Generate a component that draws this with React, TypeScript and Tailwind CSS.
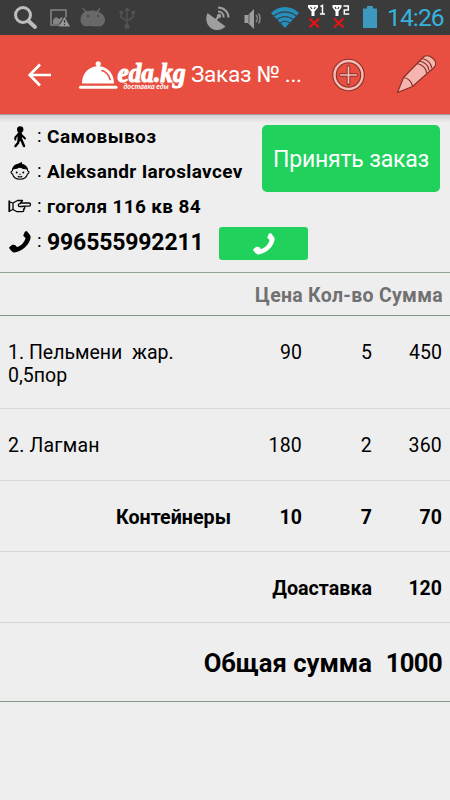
import type { ReactNode } from "react";

const contacts = [
  { icon: <WalkIcon />, text: "Самовывоз", style: "tracking-[0.45px]" },
  { icon: <FaceIcon />, text: "Aleksandr Iaroslavcev", style: "tracking-[0.35px]" },
  { icon: <HandIcon />, text: "гоголя 116 кв 84", style: "tracking-[0.35px]" },
];

const items = [
  { name: "1. Пельмени  жар. 0,5пор", price: 90, count: 5, sum: 450, style: "h-[93px]" },
  { name: "2. Лагман", price: 180, count: 2, sum: 360, style: "h-[72px] tracking-[0.2px]" },
];

function WalkIcon() {
  return (
    <svg width="22" height="22" viewBox="0 0 22 22" fill="none" stroke="#000" strokeLinecap="round" strokeLinejoin="round">
      <circle cx="11.200" cy="3.500" r="3.200" fill="#000" stroke="none" />
      <path d="M10.800 8v5" strokeWidth="4.500" />
      <path d="M9.500 8l-3.200 3.500v2M12 8.500l4 4" strokeWidth="2" />
      <path d="M10 13l-1 4-2.500 3M12 13l1.500 3.500 1.500 3.500" strokeWidth="2.500" />
    </svg>
  );
}

function FaceIcon() {
  return (
    <svg width="22" height="22" viewBox="0 0 22 22" fill="none" stroke="#000" strokeWidth="1.100">
      <path d="M3.300 10C3.300 6 6.600 3.500 11 3.500S18.700 6 18.700 10c1.600-.2 1.800 2.700-.2 3-1 3.400-3.800 5.300-7.500 5.300s-6.500-1.900-7.500-5.300c-2-.3-1.800-3.200-.2-3z" />
      <path d="M4 8c3-.3 5-1 7-2C13 7.200 15 8 18 8c-1-3-3.500-4.500-5.500-4.500V1.800L8.500 3.500C6 4 4.500 6 4 8z" fill="#000" />
      <circle cx="7.700" cy="11.500" r="1" fill="#000" stroke="none" />
      <circle cx="14.300" cy="11.500" r="1" fill="#000" stroke="none" />
      <path d="M8.800 15.300c1.300.9 3.100.9 4.400 0M10.300 13.200h1.400" />
    </svg>
  );
}

function HandIcon() {
  return (
    <svg width="24" height="17" viewBox="0 0 24 17" fill="none" stroke="#000" strokeWidth="1.300" strokeLinejoin="round">
      <path d="M1.300 2.500v11.500" strokeWidth="1.800" />
      <path d="M1.500 4l3.500 1v6.500L1.500 13M5 5l4.500-2.500h5L11.800 6M12 5h9c2 0 2 3.200 0 3.200h-5.500c1.800.3 1.800 2.700 0 2.800.8 1.300.2 2.700-1.300 2.700H9L5 11.500M11.500 5.500c-2 1.500-1.200 3.300.3 3H15.500" />
    </svg>
  );
}

function PhoneIcon({ color }: { color: string }) {
  return (
    <svg width="24" height="24" viewBox="0 0 24 24" fill={color}>
      <path d="M16.800 1.700l2-.7 3.300 4.300c1.700 2.400-1 8.300-5 12-4.200 3.900-9.800 5.700-12 4.900C3.400 21.400 1.500 18.900 1 17.600l3.200-2.800 2.900.1 1.800 2.100c2.500-.5 4.500-2 6-3.700 1.500-1.800 2.400-3.500 2.600-5.200l-2.300-2.300z" />
    </svg>
  );
}

function StatusBar() {
  return (
    <div className="flex h-[35px] bg-[#3b3b3b]">
      <svg width="390" height="35" viewBox="0 0 390 35" fill="none">
        <g stroke="#bdbdbd">
          <circle cx="23" cy="15" r="7.500" strokeWidth="3" />
          <path d="M28.500 21l6.500 6" strokeWidth="4" strokeLinecap="round" />
        </g>
        <path d="M66 17.500V10H51v15h9" stroke="#858585" strokeWidth="1.500" />
        <path d="M53 22v-2l3-3 3 2 3-2 1 1-4 6h-6z" fill="#858585" />
        <path d="M64.500 17l5.500 9.500H59z" fill="#9a9a9a" />
        <path d="M64.500 20v3M64.500 24v1.200" stroke="#3b3b3b" strokeWidth="1.200" />
        <path d="M80.500 20c0-4 1.500-6.500 4.500-8.500l-3-3 1-.5 4 3.300c3-1 7-1 9.500 0l3-3.300 1 .5-2 3.500c5 2 6.500 5 6.500 8 0 4-3.500 7-6.500 6.500-2-.4-3 0-5 0s-3-.8-5-.3c-4 .8-8-1.500-8-6.200z" fill="#686868" />
        <circle cx="88" cy="16" r="1" fill="#3b3b3b" />
        <circle cx="98" cy="16" r="1" fill="#3b3b3b" />
        <g stroke="#535353" strokeWidth="1.500">
          <path d="M127 9v16M121 13v4l6 4 6-4v-5" />
          <path d="M127 7l3 4h-6z" fill="#535353" stroke="none" />
          <circle cx="127" cy="26.500" r="2.500" fill="#535353" stroke="none" />
          <path d="M119.500 12.500h3.500M131.500 12.500h3.500" strokeWidth="3" />
        </g>
        <g stroke="#9e9e9e" strokeWidth="2">
          <path d="M207.500 13l18 13.500c-4.500 4.500-11 4.500-15 1.200-4.300-3.500-5.300-9-3-14.700z" fill="#9e9e9e" stroke="none" />
          <path d="M214 22l5-6" />
          <circle cx="219" cy="16" r="2.200" fill="#9e9e9e" stroke="none" />
          <path d="M218 11.500c3.500 0 6 2.500 5.500 6M218 7.500c6 0 10.500 4.500 10.500 10" />
        </g>
        <path d="M244.500 15h3.500l6-6v20l-6-6h-3.500z" fill="#9e9e9e" />
        <path d="M249 14v9" stroke="#555" strokeWidth="1" />
        <path d="M256 15c1.800 2 1.800 5 0 7M258.500 13.500c2 3 2 7.500 0 10" stroke="#858585" strokeWidth="1.500" />
        <path d="M271 13c8-8 20-8 28 0l-14 15z" fill="#278fbd" />
        <path d="M273 16.500c7-6 17-6 24 0M276.500 20c5-4.500 12-4.500 17 0M279.500 23.500c3.500-3 7.500-3 11 0" stroke="#354954" strokeWidth="1.400" />
        <path d="M308 5h10v2.500l-3.500 4V16h-3v-4.500l-3.500-4zM332.500 5h9v2.500l-3 4V16h-3v-4.500l-3-4z" fill="#fff" />
        <path d="M310.500 7l1.500 2M315.500 7L314 9M335 7l1.200 2M339 7l-1.200 2" stroke="#3b3b3b" strokeWidth="1.200" />
        <g stroke="#fff" strokeWidth="1.500">
          <path d="M320.500 6.500l2-1V14M320 14h5" />
          <path d="M343.500 6h4.800v4h-4v4h5" />
        </g>
        <path d="M309.500 18.500l9.500 9m0-9l-9.500 9M334 18.500l9.500 9m0-9l-9.500 9" stroke="#ec1111" strokeWidth="2" />
        <path d="M367 6h6v2.500h4V28h-14V8.500h4z" fill="#3d99c0" />
      </svg>
      <span className="-ml-[3px] text-[24.600px] leading-[36px] tracking-[-0.9px] text-[#36b3df]">14:26</span>
    </div>
  );
}

function Header() {
  return (
    <header className="flex h-20 items-center border-b border-[#a39a9a] bg-[#e84f40] text-white">
      <svg width="190" height="79" viewBox="0 0 190 79" fill="none">
        <path d="M51 40H30M40 29.500L29.700 40 40 50.500" stroke="#fff" strokeWidth="2.700" />
        <path d="M82 48.500c0-9.500 6-16.500 15-17.200a2.700 2.700 0 1 1 2.500 0c8.500.7 14.500 7.700 14.500 17.200z" fill="#fff" />
        <path d="M80.500 52.300h35.500" stroke="#fff" strokeWidth="3" strokeLinecap="round" />
        <path d="M102 35.500c4.500 1.500 7 4.500 8 9" stroke="#e84f40" strokeWidth="1.700" strokeLinecap="round" />
        <text x="117.500" y="46.500" fill="#fff" stroke="#fff" strokeWidth="1.100" strokeLinejoin="round" fontFamily="Liberation Serif, serif" fontSize="27" fontWeight="700" fontStyle="italic" textLength="68" lengthAdjust="spacingAndGlyphs">eda.kg</text>
        <text x="123.500" y="54" fill="#fff" fontFamily="Lato, sans-serif" fontSize="8" fontWeight="700" fontStyle="italic" textLength="45" lengthAdjust="spacingAndGlyphs">доставка еды</text>
      </svg>
      <h1 className="w-[140px] whitespace-nowrap pl-px pt-px text-[22.600px] tracking-[-0.3px]">Заказ № ...</h1>
      <svg width="120" height="79" viewBox="330 0 120 79" fill="none" strokeLinejoin="round">
        <circle cx="348.500" cy="40" r="14" stroke="#8b3028" strokeWidth="4.600" />
        <circle cx="348.500" cy="40" r="14" stroke="#f8bbb5" strokeWidth="2.400" />
        <path d="M348.500 32v16.500M340.500 40h16" stroke="#8b3028" strokeWidth="3.600" strokeLinecap="round" />
        <path d="M348.500 32v16M340.500 40h16" stroke="#f8bbb5" strokeWidth="1.700" strokeLinecap="round" />
        <g fill="#f5b5af" stroke="#8b3028" strokeWidth="1.200">
          <path d="M397.500 57.500l6-15 20-20.500c5-4.500 15.500 4 11 10L412.500 51.500z" />
          <path d="M403.500 42.500c4.500.5 8.500 4 9 9M417 28.500c5.500 1 9.300 5 9.500 9.500M419.500 26c5.500 1 9.300 5 9.500 9.500M422 23.500c5.500 1 9.300 5 9.500 9.500" fill="none" />
        </g>
      </svg>
    </header>
  );
}

function ContactRow({ icon, children }: { icon: ReactNode; children: ReactNode }) {
  return (
    <div className="flex h-[35px] items-center whitespace-nowrap">
      <div className="flex w-[37px] shrink-0 justify-center pl-0.5">{icon}</div>
      <span className="w-2.5 shrink-0 text-[19px]">:</span>
      {children}
    </div>
  );
}

function Customer() {
  return (
    <section className="flex h-[158px] justify-between border-b border-[#8fa792] bg-linear-to-b from-[#d2d2d2] to-[#eee] to-[8px] pt-1">
      <div className="w-[250px]">
        {contacts.map((c) => (
          <ContactRow key={c.text} icon={c.icon}>
            <span className={`pt-0.5 text-[19px] font-bold ${c.style}`}>{c.text}</span>
          </ContactRow>
        ))}
        <ContactRow icon={<PhoneIcon color="#000" />}>
          <span className="w-[172px] shrink-0 pt-1 text-[23px] font-bold tracking-[-0.15px]">996555992211</span>
          <button className="mt-1 flex h-[33px] w-[89px] shrink-0 items-center justify-center rounded-[3px] bg-[#20d25c]">
            <PhoneIcon color="#fff" />
          </button>
        </ContactRow>
      </div>
      <button className="mr-2.5 mt-1.5 h-[67px] w-[178px] rounded-[5px] bg-[#20d25c] pt-[3px] text-[23px] tracking-[-0.2px] text-white">
        Принять заказ
      </button>
    </section>
  );
}

function OrderTable() {
  return (
    <section className="text-[19.500px]">
      <div className="flex h-[43px] items-center justify-end gap-[5px] border-b border-[#829a85] pr-[7px] pt-[3px] font-bold tracking-[0.3px] text-[#717171]">
        <span>Цена</span>
        <span>Кол-во</span>
        <span>Сумма</span>
      </div>
      {items.map((item) => (
        <div key={item.name} className={`flex border-b border-[#d8d8d8] px-2 pt-[25px] leading-[23px] ${item.style}`}>
          <span className="w-[190px] whitespace-pre-wrap">{item.name}</span>
          <span className="w-[104px] text-right">{item.price}</span>
          <span className="w-[70px] text-right">{item.count}</span>
          <span className="w-[70px] text-right">{item.sum}</span>
        </div>
      ))}
      <div className="flex h-[71px] items-center border-b border-[#d5d5d5] pr-2 pt-[3px] font-bold">
        <span className="w-[231px] text-right text-[19.700px]">Контейнеры</span>
        <span className="w-[71px] text-right">10</span>
        <span className="w-[70px] text-right">7</span>
        <span className="w-[70px] text-right">70</span>
      </div>
      <div className="flex h-[71px] items-center border-b border-[#d5d5d5] pr-2 pt-[3px] font-bold">
        <span className="w-[372px] text-right text-[19.700px]">Доаставка</span>
        <span className="w-[70px] text-right">120</span>
      </div>
      <div className="flex h-[79px] items-center border-b border-[#829a85] pr-2 pt-[3px] text-[25.600px] font-bold">
        <span className="w-[372px] text-right">Общая сумма</span>
        <span className="w-[70px] text-right tracking-[-0.6px]">1000</span>
      </div>
    </section>
  );
}

export default function App() {
  return (
    <main className="h-[800px] w-[450px] overflow-hidden bg-[#eee] font-[Roboto,sans-serif] text-black">
      <StatusBar />
      <Header />
      <Customer />
      <OrderTable />
    </main>
  );
}
